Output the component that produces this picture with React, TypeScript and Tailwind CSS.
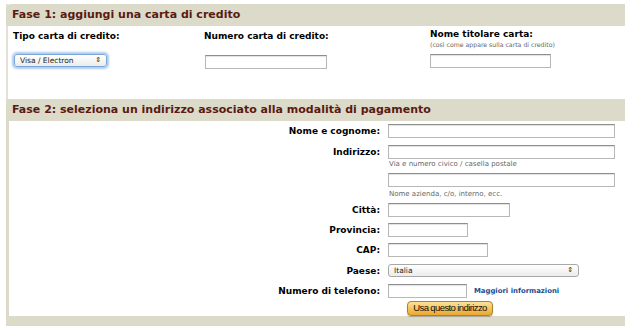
import React from 'react';

const verdana = { fontFamily: '"DejaVu Sans", Verdana, sans-serif' };

function TextInput({ width }: { width: number }) {
  return (
    <div
      className="h-[14px] border border-[#b8b8b8] border-t-[#8e8e8e] bg-white shadow-[inset_0_1px_1px_rgba(0,0,0,0.12)]"
      style={{ width }}
    />
  );
}

function SelectBox({ width, value, focused }: { width: number; value: string; focused?: boolean }) {
  return (
    <div
      className={
        'flex h-[13px] items-center justify-between rounded-[3px] border bg-gradient-to-b from-white to-[#ececec] pl-[5px] pr-[5px] text-[7.5px] text-[#222] ' +
        (focused
          ? 'border-[#7aa7d8] shadow-[0_0_2px_2px_rgba(110,160,220,0.55)]'
          : 'border-[#a8a8a8]')
      }
      style={{ width, ...verdana }}
    >
      <span>{value}</span>
      <span className="text-[7px] leading-none">⇕</span>
    </div>
  );
}

function Row({
  label,
  children,
  height,
}: {
  label: string;
  children: React.ReactNode;
  height: number;
}) {
  return (
    <div className="grid grid-cols-[371px_1fr] gap-x-[8px]" style={{ height }}>
      <div className="text-right text-[9px] font-bold leading-[14px] text-black">{label}</div>
      <div>{children}</div>
    </div>
  );
}

export default function App() {
  return (
    <div className="h-[329px] w-[625px] overflow-hidden bg-white" style={verdana}>
      <div className="pl-[6px] pt-[4px]">
        {/* Fase 1 */}
        <div className="border-l-2 border-[#e4e2d4]">
          <div className="-ml-[2px] flex h-[22px] items-center rounded-tl-[5px] bg-[#dcdbc9] pl-[6px]">
            <h2 className="text-[11px] font-bold text-[#5b1a12]">
              Fase 1: aggiungi una carta di credito
            </h2>
          </div>
          <div className="flex h-[73px] pl-[5px] pt-[4px]">
            <div className="w-[191px]">
              <div className="text-[9px] font-bold leading-[12px] text-black">Tipo carta di credito:</div>
              <div className="mt-[12px] pl-[1px]">
                <SelectBox width={93} value="Visa / Electron" focused />
              </div>
            </div>
            <div className="w-[226px]">
              <div className="text-[9px] font-bold leading-[12px] text-black">Numero carta di credito:</div>
              <div className="mt-[13px] pl-[1px]">
                <TextInput width={122} />
              </div>
            </div>
            <div className="-mt-[2px]">
              <div className="text-[9px] font-bold leading-[12px] text-black">Nome titolare carta:</div>
              <div className="text-[6.2px] leading-[10px] text-[#666]">
                (così come appare sulla carta di credito)
              </div>
              <div className="mt-[4px]">
                <TextInput width={121} />
              </div>
            </div>
          </div>
        </div>

        {/* Fase 2 */}
        <div className="border-l-[3px] border-[#dcdbc9]">
          <div className="-ml-[3px] flex h-[22px] items-center rounded-tl-[5px] bg-[#dcdbc9] pl-[6px]">
            <h2 className="text-[11px] font-bold text-[#5b1a12]">
              Fase 2: seleziona un indirizzo associato alla modalità di pagamento
            </h2>
          </div>
          <div className="pt-[3px]">
            <Row label="Nome e cognome:" height={21}>
              <TextInput width={227} />
            </Row>
            <Row label="Indirizzo:" height={28}>
              <TextInput width={227} />
              <div className="pl-[1px] text-[7px] leading-[10px] text-[#666]">
                Via e numero civico / casella postale
              </div>
            </Row>
            <Row label="" height={30}>
              <TextInput width={227} />
              <div className="mt-[2px] pl-[1px] text-[7px] leading-[10px] text-[#666]">
                Nome azienda, c/o, interno, ecc.
              </div>
            </Row>
            <Row label="Città:" height={20}>
              <TextInput width={122} />
            </Row>
            <Row label="Provincia:" height={20}>
              <TextInput width={80} />
            </Row>
            <Row label="CAP:" height={21}>
              <TextInput width={100} />
            </Row>
            <Row label="Paese:" height={20}>
              <SelectBox width={191} value="Italia" />
            </Row>
            <Row label="Numero di telefono:" height={17}>
              <div className="flex items-center gap-[7px]">
                <TextInput width={79} />
                <a className="text-[6.9px] font-bold text-[#1b4b8f]">Maggiori informazioni</a>
              </div>
            </Row>
            <div className="flex h-[15px] pl-[398px]">
              <button
                className="flex h-[15px] w-[86px] items-center justify-center rounded-[4px] border border-[#a8822c] bg-gradient-to-b from-[#fbe29a] via-[#f6c45a] to-[#eaa730] text-[9.5px] tracking-[-0.6px] text-[#111] shadow-[0_1px_1px_rgba(0,0,0,0.25)]"
                style={{ fontFamily: '"Liberation Sans", Arial, sans-serif' }}
              >
                Usa questo indirizzo
              </button>
            </div>
          </div>
          <div className="-ml-[3px] h-[10px] bg-[#dcdbc9]" />
        </div>
      </div>
    </div>
  );
}
